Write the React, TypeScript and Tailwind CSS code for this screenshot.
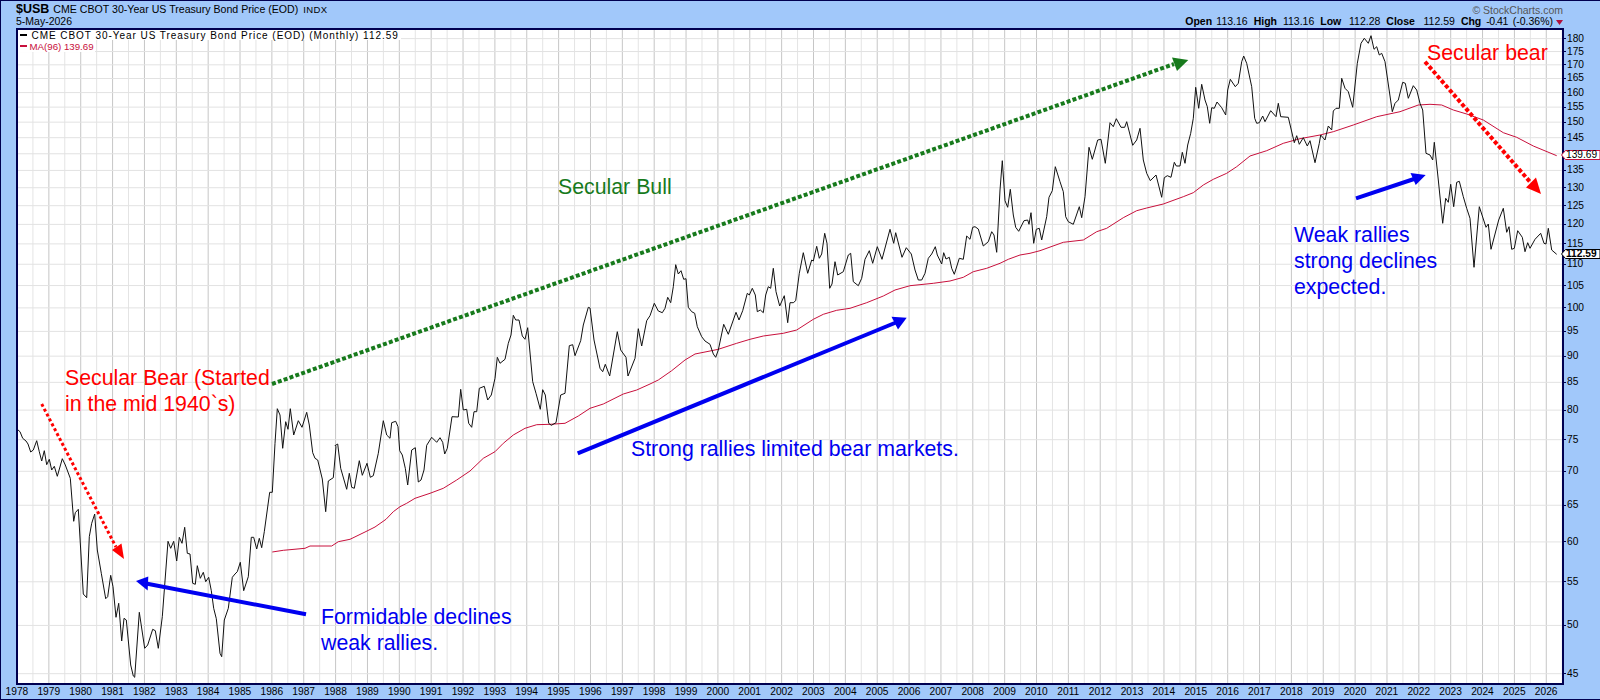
const FONT = "font-['Liberation_Sans',Arial,sans-serif]";

// chart scale, in page pixels
const yearX = (yr: number) => 17 + 31.86 * (yr - 1978);
const priceY = (p: number) => 673.7 - 458.1 * Math.log(p / 45);

const YEARS = Array.from({ length: 49 }, (_, i) => 1978 + i);
const TICKS = Array.from({ length: 28 }, (_, i) => 45 + i * 5);

// traced in 3x crops, so each run has its own origin
const trace = (ox: number, oy: number, z: number[]) => {
  const out: string[] = [];
  for (let i = 0; i < z.length; i += 2) {
    out.push(`${(ox + z[i] / 3).toFixed(1)},${(oy + z[i + 1] / 3).toFixed(1)}`);
  }
  return out.join(" ");
};

const PRICE = [
  trace(0, 380, [52,148,60,155,68,175,78,183,84,192,92,216,100,210,110,182,118,215,125,243,133,212,140,254,148,238,155,270,163,259,172,289,187,236,196,255,211,295,221,424,226,398,235,388,250,642,260,653,268,470,275,430,284,402,292,510,304,580,317,656,323,650,332,586,339,620,348,712,356,670,365,783,372,715,379,720,392,855,400,888,404,892,418,697,434,805,443,795,458,748,466,752,475,805,487,710,504,484,512,505,521,484,530,543,538,472,546,490,554,442,562,520,570,522,578,610,586,613,592,557,601,595,610,577,617,605,626,592,634,632,641,685,649,716,660,820,665,830,673,720,685,685,697,592,705,582,712,575,721,547,731,632,745,590,754,472,761,472,770,507,778,475,785,503,793,455,809,337,817,337,825,190,832,86,840,105,848,205,857,125,864,148,871,86,881,165,895,122,906,142,920,97,928,135,938,218,945,235,953,240,967,297,977,395,985,303,1000,293,1008,200]),
  trace(250, 280, [255,497,263,492,272,565,290,628,298,580,305,622,313,625,328,542,337,586,351,550,361,592,370,587,385,520,400,422,410,465,420,475,425,428,437,424,444,440,449,512,457,525,466,565,473,615,485,510,496,503,505,606,513,600,522,570,530,496,545,472,560,487,570,473,578,487,584,522,592,505,606,410,625,411,632,328,640,390,650,388,656,430,665,442,672,395,680,395,688,325,703,319,713,360,724,345,735,295,742,232,750,250,765,238,775,190,783,165,790,106,797,120,807,120,817,168,825,178,833,143,848,305,858,340,871,388,878,329,886,345,896,430,904,436,918,428,932,345,945,340,958,197,968,194,975,227,992,182,1000,135,1015,82,1020,84,1032,180,1050,265,1058,275,1066,253,1079,288,1102,155,1112,210,1128,232,1134,288,1155,235,1165,146,1175,198,1190,122,1200,107]),
  trace(650, 180, [13,370,25,393,37,398,45,385,53,352,62,368,70,320,77,254,85,282,93,272,101,298,108,296,115,382,125,395,134,400,142,440,155,470,165,483,180,493,190,522,197,532,205,510,221,433,235,463,258,397,267,420,278,392,292,340,298,345,307,325,316,345,322,395,331,390,340,398,347,345,355,320,362,325,370,265,378,335,389,378,403,347,413,428,420,368,430,368,437,362,448,280,460,218,473,280,485,240,490,243,500,199,508,235,515,222,524,160,531,190,539,325,546,312,555,245,563,285,580,275,595,225,602,220,610,305,625,317,635,295,645,238,658,212,668,250,682,200,696,238,720,148,731,190,737,158,756,232,769,203,784,222,795,270,805,300,815,300,825,280,835,235,845,222,856,200,862,225,875,252,881,218,888,237,898,232,905,265,913,283,928,235,940,238,950,168,960,178,968,142,975,140,985,147,1000,198,1015,185,1025,155,1032,165,1040,217]),
  trace(950, 40, [150,450,157,362,165,482,173,502,181,448,190,525,197,562,206,574,222,542,233,540,237,553,243,518,251,610,259,568,268,565,275,600,290,530,297,472,307,452,316,380,330,425,340,455,347,530,355,545,370,553,388,500,395,533,405,470,417,322,427,358,443,300,453,298,466,370,480,248,490,260,499,236,513,262,524,262,530,245,548,316,560,300,570,265,580,360,590,400,601,422,618,405,635,472,643,413,652,407,663,412,673,367,679,378,690,378,697,337,705,370,713,315,722,280,730,235,737,142,746,205,755,133,765,180,772,200,779,250,785,203,793,205,801,186,815,203,827,225,833,150,841,118,856,140,865,130,875,65,881,48,890,70,905,140,914,235,920,250,928,248,938,228,945,245,962,212,978,230,985,190,992,230,1015,232]),
  trace(1250, 20, [133,368,140,347,148,373,160,353,172,378,180,362,195,428,208,370,212,345,225,360,235,318,245,330,250,273,258,265,268,265,275,175,285,205,295,215,308,262,322,130,333,70,343,55,355,70,363,47,372,88,380,80,388,105,395,100,405,125,427,275,435,250,445,240,458,187,466,190,475,235,490,197,500,210,510,250,518,270,528,400,540,405,548,420,553,367,565,480,578,610,587,535,595,547,602,493,611,560,620,487,628,484,640,530,650,565,660,595,672,742,688,560,708,622,715,612,723,688,746,600,760,565,770,637,777,620,785,688,793,685,803,632,817,652,825,695,833,668,840,685,855,658,872,640,882,670,888,672,895,625,905,690,920,703]),
].join(" ");

const MA = [
  trace(0, 380, [817,516,850,511,915,505,930,498,995,498,1015,485,1050,478,1095,456,1125,441]),
  trace(250, 280, [408,718,430,695,450,680,470,670,495,655,540,640,580,625,620,600,660,573,700,535,735,515,760,490,790,465,825,445,860,434,900,433,945,430,985,408,1020,385,1060,372,1120,342,1160,330,1200,312]),
  trace(650, 180, [25,600,65,572,105,540,135,522,180,513,205,508,260,490,300,478,340,468,400,460,440,450,490,418,520,403,560,391,600,385,650,368,700,348,735,330,780,317,850,310,900,303,940,292,970,275,1010,265,1050,250]),
  trace(950, 40, [175,658,210,645,240,640,270,632,340,607,400,600,440,575,470,565,520,533,560,512,590,504,640,492,700,470,730,458,760,435,790,418,830,400,860,380]),
  trace(1250, 20, [0,408,50,392,100,370,150,356,210,345,250,335,310,315,380,290,450,275,505,255,540,253,575,255,610,270,650,282,700,300,760,338,800,352,850,378,920,407]),
].join(" ");

function Note({ x, y, color, children }: { x: number; y: number; color: string; children: React.ReactNode }) {
  // x,y = left edge and first baseline in page pixels
  return (
    <div
      className="absolute text-[21.3px] leading-[26px] whitespace-pre"
      style={{ left: x - 18, top: y - 30 - 20.3, color }}
    >
      {children}
    </div>
  );
}

function Tag({ top, stroke, bold, children }: { top: number; stroke: string; bold?: boolean; children: React.ReactNode }) {
  return (
    <div className="absolute left-[-3.5px] w-[39.5px] h-[10px] flex items-center pl-[5.5px] text-[10.2px]" style={{ top }}>
      <svg className="absolute inset-0" width="39.5" height="10" viewBox="0 0 39.5 10">
        <polygon points="0.500,5 4.500,0.500 39,0.500 39,9.500 4.500,9.500" fill="#fff" stroke={stroke} />
      </svg>
      <span className={bold ? "relative font-bold" : "relative"}>{children}</span>
    </div>
  );
}

export default function App() {
  return (
    <div className={`${FONT} w-[1600px] h-[700px] flex flex-col border-l border-t border-b border-[#000050] bg-[#a1c8fa] text-black overflow-hidden`}>
      {/* Header */}
      <header className="h-[27px] pt-[2px] pl-[15px] pr-[37px] flex flex-col shrink-0">
        <div className="h-[13px] flex items-center justify-between">
          <div className="flex items-baseline">
            <span className="text-[12.5px] font-bold mr-[4px]">$USB</span>
            <span className="text-[10.6px]">CME CBOT 30-Year US Treasury Bond Price (EOD)</span>
            <span className="text-[9.5px] ml-[5px] tracking-[0.4px]">INDX</span>
          </div>
          <span className="text-[10.5px] text-[#555] translate-y-[1px]">© StockCharts.com</span>
        </div>
        <div className="h-[12px] flex items-center justify-between text-[10.5px]">
          <span>5-May-2026</span>
          <div className="flex items-center gap-[6px]">
            <span><b className="mr-[1.3px]">Open</b> 113.16</span>
            <span><b className="mr-[3px]">High</b> 113.16</span>
            <span><b className="mr-[4.8px]">Low</b> 112.28</span>
            <span><b className="mr-[5.7px]">Close</b> 112.59</span>
            <span className="flex items-center">
              <b className="mr-[5px]">Chg</b>
              <span className="mr-[5px] tracking-[-0.5px]">-0.41</span>
              <span className="mr-[3px]">(-0.36%)</span>
              <svg width="7" height="5" viewBox="0 0 7 5"><path d="M0 0h7L3.500 5z" fill="#b0103c" /></svg>
            </span>
          </div>
        </div>
      </header>

      {/* Chart row */}
      <div className="flex flex-1 min-h-0">
        <div className="w-[15px] shrink-0" />
        <div className="relative w-[1548px] shrink-0 border-2 border-[#000050] bg-white">
          <svg className="block w-full h-full" viewBox="18 30 1544 653">
            {YEARS.map((yr) => (
              <g key={yr}>
                <line x1={yearX(yr)} x2={yearX(yr)} y1={30} y2={683} stroke="#c6c6c6" />
                <line x1={yearX(yr + 0.5)} x2={yearX(yr + 0.5)} y1={30} y2={683} stroke="#e4e4e4" />
              </g>
            ))}
            {TICKS.map((p) => (
              <line key={p} x1={18} x2={1562} y1={priceY(p)} y2={priceY(p)} stroke="#e2e2e2" />
            ))}
            <polyline points={MA} fill="none" stroke="#c8103c" strokeWidth="1" />
            <polyline points={PRICE} fill="none" stroke="#111" strokeWidth="1" />

            {/* secular bull */}
            <line x1="272" y1="384" x2="1174" y2="64" stroke="#177a1c" strokeWidth="4" strokeDasharray="4 2.2" />
            <polygon points="1188.300,60 1172,57.500 1177,71" fill="#177a1c" />
            {/* bear, 1940s */}
            <line x1="41.700" y1="404" x2="116" y2="547" stroke="#ff0000" strokeWidth="3" strokeDasharray="3 2.500" />
            <polygon points="124,559 112,550 121.500,543.500" fill="#ff0000" />
            {/* secular bear */}
            <line x1="1425" y1="61.700" x2="1531" y2="183" stroke="#ff0000" strokeWidth="4" strokeDasharray="4 2.200" />
            <polygon points="1541,194 1526,187.500 1536,177.500" fill="#ff0000" />
            {/* blue arrows */}
            <line x1="306" y1="614.300" x2="146" y2="583.500" stroke="#0000f0" strokeWidth="4" />
            <polygon points="136,581 148.300,576.500 147.700,590.500" fill="#0000f0" />
            <line x1="577.700" y1="453.300" x2="896" y2="322.500" stroke="#0000f0" strokeWidth="4" />
            <polygon points="906.700,317.700 891.500,316.700 898,329.500" fill="#0000f0" />
            <line x1="1356" y1="198.300" x2="1414" y2="179" stroke="#0000f0" strokeWidth="4" />
            <polygon points="1425.700,175 1410.500,173 1415.700,185" fill="#0000f0" />
          </svg>

          {/* Legend */}
          <div className="absolute left-0 top-0 flex flex-col items-start text-[10px] leading-[11px]">
            <div className="flex items-center h-[10px] bg-white pl-[2px] pr-[2px] tracking-[0.95px]">
              <span className="w-[7px] h-[1.500px] bg-black mr-[4.500px]" />
              CME CBOT 30-Year US Treasury Bond Price (EOD) (Monthly) 112.59
            </div>
            <div className="flex items-center h-[12px] bg-white pl-[2px] pr-[1px] text-[#c8103c] text-[9.700px]">
              <span className="w-[7px] h-[1.500px] bg-[#c8103c] mr-[2.500px]" />
              MA(96) 139.69
            </div>
          </div>

          {/* Annotations */}
          <Note x={1427} y={60.7} color="#ff0000">Secular bear</Note>
          <Note x={558} y={194.3} color="#177a1c">Secular Bull</Note>
          <Note x={65} y={385.7} color="#ff0000">{"Secular Bear (Started\nin the mid 1940`s)"}</Note>
          <Note x={1294} y={242.7} color="#0000f0">{"Weak rallies\nstrong declines\nexpected."}</Note>
          <Note x={631} y={456} color="#0000f0">Strong rallies limited bear markets.</Note>
          <Note x={321} y={624} color="#0000f0">{"Formidable declines\nweak rallies."}</Note>
        </div>

        {/* Price axis */}
        <div className="relative flex-1 text-[10.2px] leading-[12px]">
          {TICKS.filter((p) => p !== 140).map((p) => (
            <span key={p} className="absolute left-0 flex items-center" style={{ top: priceY(p) - 28 - 6 }}>
              <span className="w-[2px] h-px bg-[#000050] mr-[1px]" />
              {p}
            </span>
          ))}
          <Tag top={122} stroke="#c8103c">139.69</Tag>
          <Tag top={221} stroke="#000" bold>112.59</Tag>
        </div>
      </div>

      {/* Year axis */}
      <div className="h-[14px] shrink-0 grid grid-cols-[repeat(49,31.86px)] text-[10.2px] leading-[14px] text-center">
        {YEARS.map((yr) => (
          <span key={yr}>{yr}</span>
        ))}
      </div>
    </div>
  );
}
